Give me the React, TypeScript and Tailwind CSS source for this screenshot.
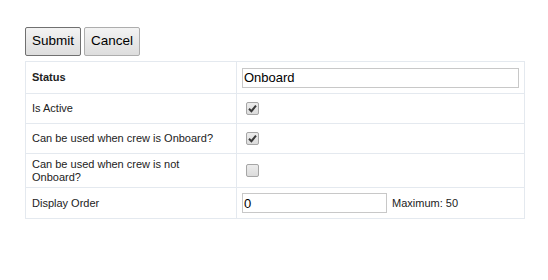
import React from "react";

const rowBorder = "border border-[#e4e9ef]";

// grey, old-style checkbox as in the screenshot
function Check({ checked }: { checked: boolean }) {
  return (
    <span className="ml-[4px] flex h-[13px] w-[13px] items-center justify-center rounded-[2px] border border-[#a6a6a6] bg-gradient-to-b from-[#ececec] to-[#dcdcdc]">
      {checked && (
        <svg width="9" height="9" viewBox="0 0 9 9">
          <path d="M1 4.8 L3.4 7.2 L8 1.6" fill="none" stroke="#3a3a3a" strokeWidth="2" />
        </svg>
      )}
    </span>
  );
}

export default function App() {
  return (
    <div className="h-[280px] w-[548px] bg-white pl-[25px] pt-[27px] font-['Liberation_Sans',Arial,sans-serif] text-[#222]">
      <div className="flex gap-[3px]">
        <button className="h-[29px] w-[56px] rounded-[2px] border border-[#707070] bg-gradient-to-b from-[#f3f3f3] to-[#dddddd] text-[13.5px] text-black">
          Submit
        </button>
        <button className="h-[29px] w-[56px] rounded-[2px] border border-[#adadad] bg-gradient-to-b from-[#f3f3f3] to-[#dddddd] text-[13.5px] text-black">
          Cancel
        </button>
      </div>
      <table className="mt-[5px] w-[500px] border-collapse text-[11px] leading-[13px]">
        <tbody>
          <tr className="h-[32px]">
            <td className={`${rowBorder} w-[211px] px-[6px] font-bold`}>Status</td>
            <td className={`${rowBorder} px-[5px]`}>
              <input
                defaultValue="Onboard"
                className="block h-[20px] w-[277px] border border-[#c8c8c8] px-[1px] text-[13px] text-black outline-none"
              />
            </td>
          </tr>
          <tr className="h-[30px]">
            <td className={`${rowBorder} px-[6px]`}>Is Active</td>
            <td className={`${rowBorder} px-[5px]`}>
              <Check checked />
            </td>
          </tr>
          <tr className="h-[30px]">
            <td className={`${rowBorder} px-[6px]`}>Can be used when crew is Onboard?</td>
            <td className={`${rowBorder} px-[5px]`}>
              <Check checked />
            </td>
          </tr>
          <tr className="h-[34px]">
            <td className={`${rowBorder} px-[6px]`}>
              Can be used when crew is not
              <br />
              Onboard?
            </td>
            <td className={`${rowBorder} px-[5px]`}>
              <Check checked={false} />
            </td>
          </tr>
          <tr className="h-[31px]">
            <td className={`${rowBorder} px-[6px]`}>Display Order</td>
            <td className={`${rowBorder} px-[5px]`}>
              <div className="flex items-center gap-[5px]">
                <input
                  defaultValue="0"
                  className="block h-[20px] w-[145px] border border-[#c8c8c8] px-[1px] text-[13px] text-black outline-none"
                />
                <span>Maximum: 50</span>
              </div>
            </td>
          </tr>
        </tbody>
      </table>
    </div>
  );
}
